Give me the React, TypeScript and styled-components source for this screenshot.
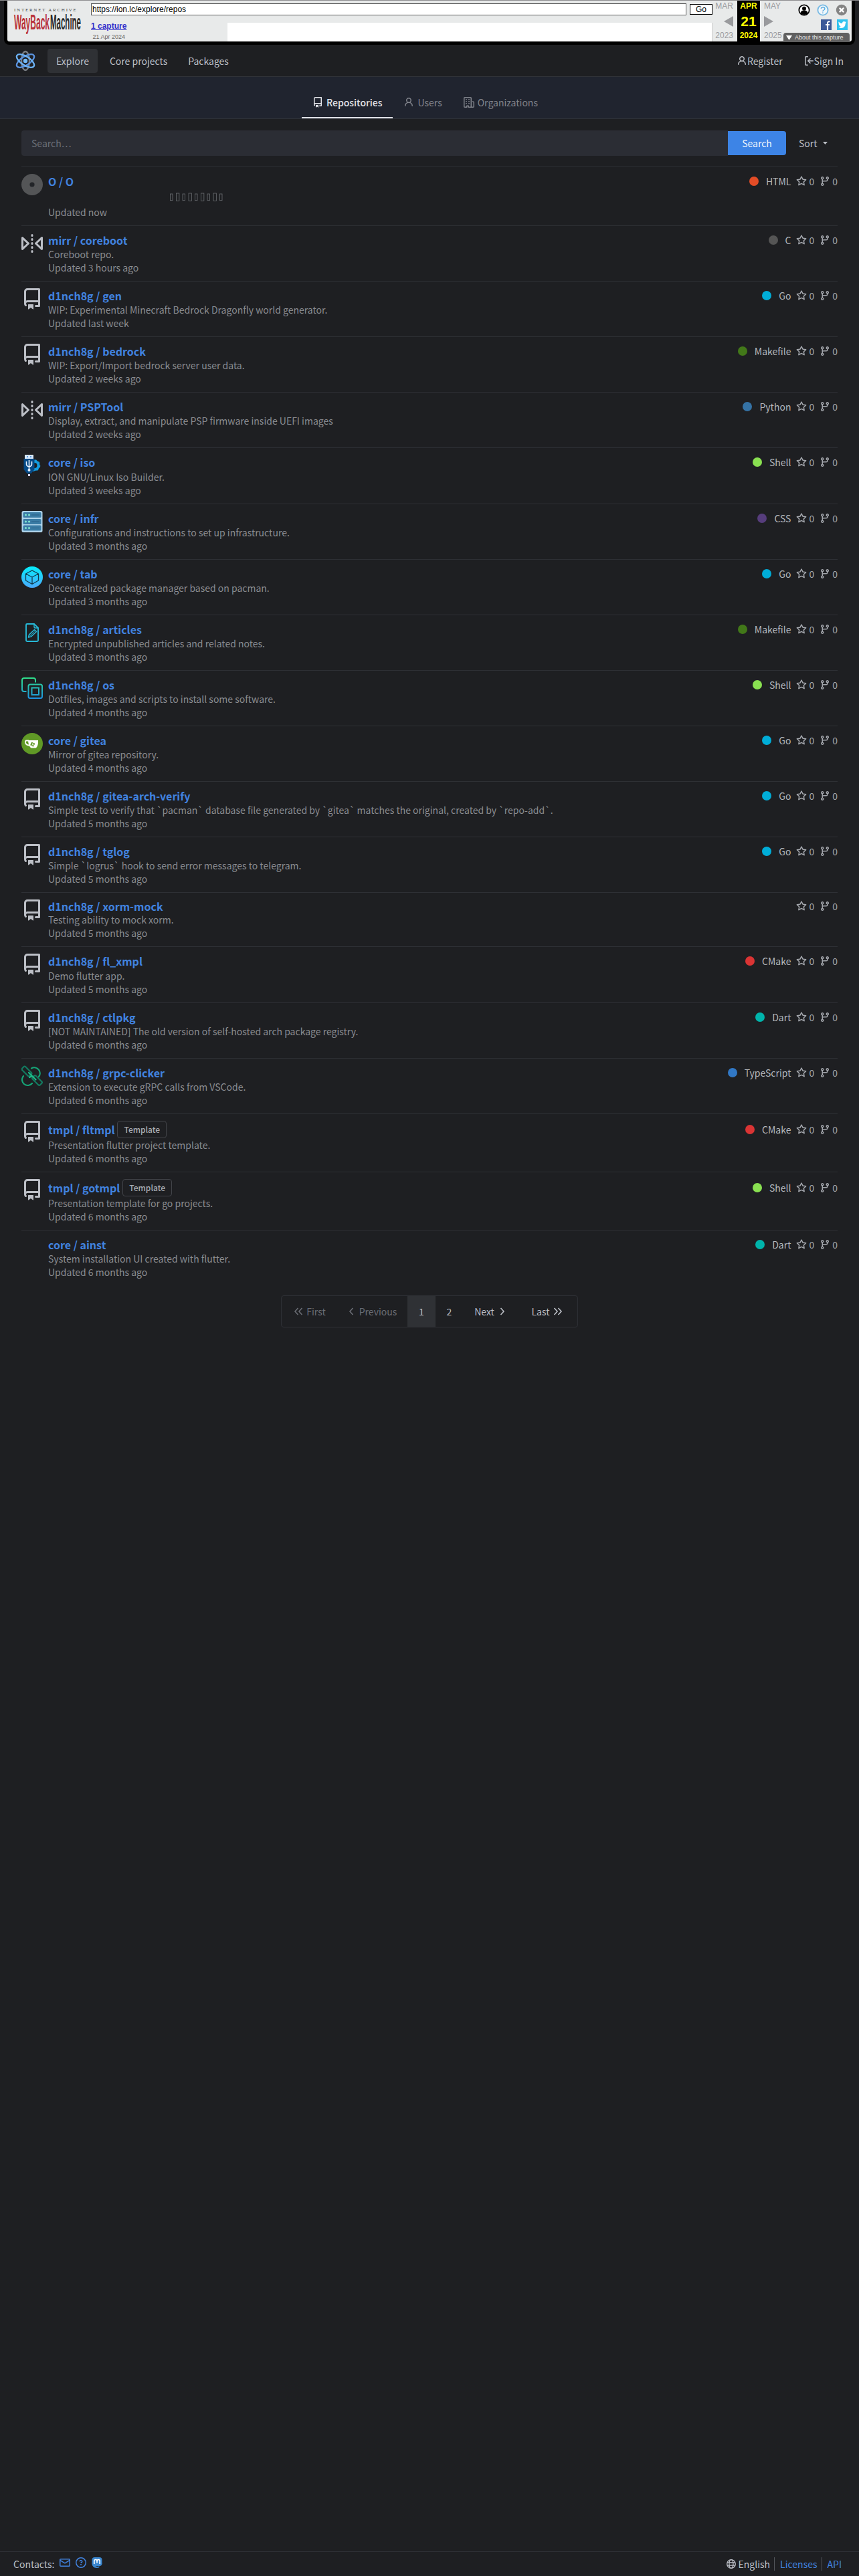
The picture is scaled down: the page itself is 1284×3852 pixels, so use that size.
import React from "react";
import styled, { createGlobalStyle } from "styled-components";

type IconName =
  | "repo"
  | "mirror"
  | "star"
  | "branch"
  | "person"
  | "signIn"
  | "organization"
  | "mail"
  | "question";

type AvatarName =
  | "repo"
  | "mirror"
  | "disc"
  | "usb"
  | "server"
  | "cube"
  | "article"
  | "layers"
  | "gitea"
  | "clicker"
  | "none";

interface IRepo {
  owner: string;
  name: string;
  avatar: AvatarName;
  updated: string;
  description?: string;
  language?: string;
  template?: boolean;
}

const iconPaths: Record<IconName, string> = {
  repo: "M2 2.5A2.5 2.5 0 0 1 4.5 0h8.75a.75.75 0 0 1 .75.75v12.5a.75.75 0 0 1-.75.75h-2.5a.75.75 0 0 1 0-1.5h1.75v-2h-8a1 1 0 0 0-.714 1.7.75.75 0 1 1-1.072 1.05A2.495 2.495 0 0 1 2 11.5Zm10.5-1h-8a1 1 0 0 0-1 1v6.708A2.486 2.486 0 0 1 4.5 9h8ZM5 12.25a.25.25 0 0 1 .25-.25h3.5a.25.25 0 0 1 .25.25v3.25a.25.25 0 0 1-.4.2l-1.45-1.087a.249.249 0 0 0-.3 0L5.4 15.7a.25.25 0 0 1-.4-.2Z",
  mirror:
    "M15.547 3.061A.75.75 0 0 1 16 3.75v8.5a.751.751 0 0 1-1.265.545l-4.5-4.25a.75.75 0 0 1 0-1.09l4.5-4.25a.75.75 0 0 1 .812-.144ZM0 12.25v-8.5a.751.751 0 0 1 1.265-.545l4.5 4.25a.75.75 0 0 1 0 1.09l-4.5 4.25A.75.75 0 0 1 0 12.25Zm1.5-6.76v5.02L4.158 8ZM11.842 8l2.658 2.51V5.49ZM8 4a.75.75 0 0 1 .75.75v.5a.75.75 0 0 1-1.5 0v-.5A.75.75 0 0 1 8 4Zm.75-2.25v.5a.75.75 0 0 1-1.5 0v-.5a.75.75 0 0 1 1.5 0Zm0 6v.5a.75.75 0 0 1-1.5 0v-.5a.75.75 0 0 1 1.5 0ZM8 10a.75.75 0 0 1 .75.75v.5a.75.75 0 0 1-1.5 0v-.5A.75.75 0 0 1 8 10Zm0 3a.75.75 0 0 1 .75.75v.5a.75.75 0 0 1-1.5 0v-.5A.75.75 0 0 1 8 13Z",
  star: "M8 .25a.75.75 0 0 1 .673.418l1.882 3.815 4.21.612a.75.75 0 0 1 .416 1.279l-3.046 2.97.719 4.192a.751.751 0 0 1-1.088.791L8 12.347l-3.766 1.98a.75.75 0 0 1-1.088-.79l.72-4.194L.818 6.374a.75.75 0 0 1 .416-1.28l4.21-.611L7.327.668A.75.75 0 0 1 8 .25Zm0 2.445L6.615 5.5a.75.75 0 0 1-.564.41l-3.097.45 2.24 2.184a.75.75 0 0 1 .216.664l-.528 3.084 2.769-1.456a.75.75 0 0 1 .698 0l2.77 1.456-.53-3.084a.75.75 0 0 1 .216-.664l2.24-2.183-3.096-.45a.75.75 0 0 1-.564-.41L8 2.694Z",
  branch:
    "M9.5 3.25a2.25 2.25 0 1 1 3 2.122V6A2.5 2.5 0 0 1 10 8.5H6a1 1 0 0 0-1 1v1.128a2.251 2.251 0 1 1-1.5 0V5.372a2.25 2.25 0 1 1 1.5 0v1.836A2.493 2.493 0 0 1 6 7h4a1 1 0 0 0 1-1v-.628A2.25 2.25 0 0 1 9.5 3.25Zm-6 0a.75.75 0 1 0 1.5 0 .75.75 0 0 0-1.5 0Zm8.25-.75a.75.75 0 1 0 0 1.5.75.75 0 0 0 0-1.5ZM4.25 12a.75.75 0 1 0 0 1.5.75.75 0 0 0 0-1.5Z",
  person:
    "M10.561 8.073a6.005 6.005 0 0 1 3.432 5.142.75.75 0 1 1-1.498.07 4.5 4.5 0 0 0-8.99 0 .75.75 0 0 1-1.498-.07 6.004 6.004 0 0 1 3.431-5.142 3.999 3.999 0 1 1 5.123 0ZM10.5 5a2.5 2.5 0 1 0-5 0 2.5 2.5 0 0 0 5 0Z",
  signIn:
    "M2 2.75C2 1.784 2.784 1 3.75 1h2.5a.75.75 0 0 1 0 1.5h-2.5a.25.25 0 0 0-.25.25v10.5c0 .138.112.25.25.25h2.5a.75.75 0 0 1 0 1.5h-2.5A1.75 1.75 0 0 1 2 13.25Zm6.56 4.5h5.69a.75.75 0 0 1 0 1.5H8.56l1.97 1.97a.749.749 0 0 1-.326 1.275.749.749 0 0 1-.734-.215L6.22 8.53a.75.75 0 0 1 0-1.06l3.25-3.25a.749.749 0 0 1 1.275.326.749.749 0 0 1-.215.734Z",
  organization:
    "M1.75 16A1.75 1.75 0 0 1 0 14.25V1.75C0 .784.784 0 1.75 0h8.5C11.216 0 12 .784 12 1.75v12.5c0 .085-.006.168-.018.25h2.268a.25.25 0 0 0 .25-.25V8.285a.25.25 0 0 0-.111-.208l-1.055-.703a.749.749 0 1 1 .832-1.248l1.055.703c.487.325.779.871.779 1.456v5.965A1.75 1.75 0 0 1 14.25 16h-3.5a.766.766 0 0 1-.197-.026c-.099.017-.2.026-.303.026h-3a.75.75 0 0 1-.75-.75V14h-1v1.25a.75.75 0 0 1-.75.75Zm-.25-1.75c0 .138.112.25.25.25H4v-1.25a.75.75 0 0 1 .75-.75h2.5a.75.75 0 0 1 .75.75v1.25h2.25a.25.25 0 0 0 .25-.25V1.75a.25.25 0 0 0-.25-.25h-8.5a.25.25 0 0 0-.25.25ZM3.75 6h.5a.75.75 0 0 1 0 1.5h-.5a.75.75 0 0 1 0-1.5ZM3 3.75A.75.75 0 0 1 3.75 3h.5a.75.75 0 0 1 0 1.5h-.5A.75.75 0 0 1 3 3.75Zm4 3A.75.75 0 0 1 7.75 6h.5a.75.75 0 0 1 0 1.5h-.5A.75.75 0 0 1 7 6.75ZM7.75 3h.5a.75.75 0 0 1 0 1.5h-.5a.75.75 0 0 1 0-1.5ZM3 9.75A.75.75 0 0 1 3.75 9h.5a.75.75 0 0 1 0 1.5h-.5A.75.75 0 0 1 3 9.75ZM7.75 9h.5a.75.75 0 0 1 0 1.5h-.5a.75.75 0 0 1 0-1.5Z",
  mail: "M1.75 2h12.5c.966 0 1.75.784 1.75 1.75v8.5A1.75 1.75 0 0 1 14.25 14H1.75A1.75 1.75 0 0 1 0 12.25v-8.5C0 2.784.784 2 1.75 2ZM1.5 12.251c0 .138.112.25.25.25h12.5a.25.25 0 0 0 .25-.25V5.809L8.38 9.397a.75.75 0 0 1-.76 0L1.5 5.809v6.442Zm13-8.181v-.32a.25.25 0 0 0-.25-.25H1.75a.25.25 0 0 0-.25.25v.32L8 7.88Z",
  question:
    "M0 8a8 8 0 1 1 16 0A8 8 0 0 1 0 8Zm8-6.5a6.5 6.5 0 1 0 0 13 6.5 6.5 0 0 0 0-13ZM6.92 6.085h.001a.749.749 0 1 1-1.342-.67c.169-.339.436-.701.849-.977C6.845 4.16 7.369 4 8 4a2.756 2.756 0 0 1 1.637.525c.503.377.863.965.863 1.725 0 .448-.115.83-.329 1.15-.205.307-.47.513-.692.662-.109.072-.22.138-.313.195l-.006.004a6.24 6.24 0 0 0-.26.16.952.952 0 0 0-.276.245.75.75 0 0 1-1.248-.832c.184-.264.42-.489.692-.661.103-.067.207-.132.313-.195l.007-.004c.1-.061.182-.11.258-.161a.969.969 0 0 0 .277-.245C8.96 6.514 9 6.427 9 6.25a.612.612 0 0 0-.262-.525A1.27 1.27 0 0 0 8 5.5c-.369 0-.595.09-.74.187a1.01 1.01 0 0 0-.34.398ZM9 11a1 1 0 1 1-2 0 1 1 0 0 1 2 0Z",
};

const languageColors: Record<string, string> = {
  HTML: "#e34c26",
  C: "#555555",
  Go: "#00add8",
  Makefile: "#427819",
  Python: "#3572a5",
  Shell: "#89e051",
  CSS: "#563d7c",
  CMake: "#da3434",
  Dart: "#00b4ab",
  TypeScript: "#3178c6",
};

const repos: IRepo[] = [
  { owner: "O", name: "O", avatar: "disc", updated: "now", language: "HTML" },
  { owner: "mirr", name: "coreboot", avatar: "mirror", description: "Coreboot repo.", updated: "3 hours ago", language: "C" },
  { owner: "d1nch8g", name: "gen", avatar: "repo", description: "WIP: Experimental Minecraft Bedrock Dragonfly world generator.", updated: "last week", language: "Go" },
  { owner: "d1nch8g", name: "bedrock", avatar: "repo", description: "WIP: Export/Import bedrock server user data.", updated: "2 weeks ago", language: "Makefile" },
  { owner: "mirr", name: "PSPTool", avatar: "mirror", description: "Display, extract, and manipulate PSP firmware inside UEFI images", updated: "2 weeks ago", language: "Python" },
  { owner: "core", name: "iso", avatar: "usb", description: "ION GNU/Linux Iso Builder.", updated: "3 weeks ago", language: "Shell" },
  { owner: "core", name: "infr", avatar: "server", description: "Configurations and instructions to set up infrastructure.", updated: "3 months ago", language: "CSS" },
  { owner: "core", name: "tab", avatar: "cube", description: "Decentralized package manager based on pacman.", updated: "3 months ago", language: "Go" },
  { owner: "d1nch8g", name: "articles", avatar: "article", description: "Encrypted unpublished articles and related notes.", updated: "3 months ago", language: "Makefile" },
  { owner: "d1nch8g", name: "os", avatar: "layers", description: "Dotfiles, images and scripts to install some software.", updated: "4 months ago", language: "Shell" },
  { owner: "core", name: "gitea", avatar: "gitea", description: "Mirror of gitea repository.", updated: "4 months ago", language: "Go" },
  { owner: "d1nch8g", name: "gitea-arch-verify", avatar: "repo", description: "Simple test to verify that `pacman` database file generated by `gitea` matches the original, created by `repo-add`.", updated: "5 months ago", language: "Go" },
  { owner: "d1nch8g", name: "tglog", avatar: "repo", description: "Simple `logrus` hook to send error messages to telegram.", updated: "5 months ago", language: "Go" },
  { owner: "d1nch8g", name: "xorm-mock", avatar: "repo", description: "Testing ability to mock xorm.", updated: "5 months ago" },
  { owner: "d1nch8g", name: "fl_xmpl", avatar: "repo", description: "Demo flutter app.", updated: "5 months ago", language: "CMake" },
  { owner: "d1nch8g", name: "ctlpkg", avatar: "repo", description: "[NOT MAINTAINED] The old version of self-hosted arch package registry.", updated: "6 months ago", language: "Dart" },
  { owner: "d1nch8g", name: "grpc-clicker", avatar: "clicker", description: "Extension to execute gRPC calls from VSCode.", updated: "6 months ago", language: "TypeScript" },
  { owner: "tmpl", name: "fltmpl", avatar: "repo", description: "Presentation flutter project template.", updated: "6 months ago", language: "CMake", template: true },
  { owner: "tmpl", name: "gotmpl", avatar: "repo", description: "Presentation template for go projects.", updated: "6 months ago", language: "Shell", template: true },
  { owner: "core", name: "ainst", avatar: "none", description: "System installation UI created with flutter.", updated: "6 months ago", language: "Dart" },
];

const Icon = ({ name, size = 16 }: { name: IconName; size?: number }) => (
  <Svg width={size} height={size} viewBox="0 0 16 16" fill="currentColor">
    <path d={iconPaths[name]} />
  </Svg>
);

const Chevron = ({ left, double }: { left?: boolean; double?: boolean }) => (
  <Svg
    width={double ? 14 : 8}
    height={14}
    viewBox={double ? "0 0 14 14" : "0 0 8 14"}
    fill="none"
    stroke="currentColor"
    strokeWidth="1.6"
  >
    {left ? (
      <>
        <path d="M6.5 2 2 7l4.500 5" />
        {double && <path d="M12.500 2 8 7l4.500 5" />}
      </>
    ) : (
      <>
        <path d="M1.500 2 6 7l-4.500 5" />
        {double && <path d="M7.500 2 12 7l-4.500 5" />}
      </>
    )}
  </Svg>
);

const SiteLogo = () => (
  <Svg width="30" height="32" viewBox="0 0 30 32" fill="none" strokeWidth="2.4">
    <ellipse cx="15" cy="16" rx="6" ry="14" stroke="#777b80" />
    <ellipse cx="15" cy="16" rx="6.500" ry="15" stroke="#5b94e0" transform="rotate(57 15 16)" />
    <ellipse cx="15" cy="16" rx="6.500" ry="15" stroke="#6cb2f5" transform="rotate(-57 15 16)" />
    <circle cx="15" cy="16" r="3.200" fill="#74baf8" />
  </Svg>
);

const Avatar = ({ name }: { name: AvatarName }) => {
  switch (name) {
    case "repo":
    case "mirror":
      return <Icon name={name} size={32} />;
    case "disc":
      return (
        <Svg width="32" height="32" viewBox="0 0 32 32">
          <circle cx="16" cy="16" r="16" fill="#545557" />
          <circle cx="16" cy="16" r="3.600" fill="#222428" />
        </Svg>
      );
    case "usb":
      return (
        <Svg width="32" height="32" viewBox="0 0 32 32">
          <circle cx="19.500" cy="16" r="6" fill="none" stroke="#139ce0" strokeWidth="4" />
          <circle cx="19.500" cy="16" r="8" fill="none" stroke="#139ce0" strokeWidth="1.600" strokeDasharray="3 3.280" />
          <path d="M5 0h13v7H5z" fill="#d5e7fb" />
          <path d="M8 2h2v2H8zM13 2h2v2h-2z" fill="#5c98d8" />
          <path d="M3.500 6h16v16l-5 6h-6l-5-6z" fill="#064a86" />
          <path d="M11.500 8v15M7.500 10v4q0 3 4 4 4-1 4-4v-4" fill="none" stroke="#e8f2ff" strokeWidth="1.600" />
          <circle cx="11.500" cy="23" r="2" fill="#e8f2ff" />
          <path d="M10 29h3v3h-3z" fill="#d9d6ff" />
        </Svg>
      );
    case "server":
      return (
        <Svg width="32" height="32" viewBox="0 0 32 32">
          <rect width="31" height="32" x=".5" rx="2.500" fill="#aed3ea" />
          {[2, 12, 21.5].map((y) => (
            <g key={y}>
              <rect x="2.500" y={y} width="27" height="8" rx="1.500" fill="#3b7ca5" />
              <circle cx="6.500" cy={y + 4} r="1.500" fill="#80e8d0" />
              <circle cx="11.500" cy={y + 4} r="1.500" fill="#80e8d0" />
              <path d={`M15 ${y + 4}h12`} stroke="#285f86" />
            </g>
          ))}
        </Svg>
      );
    case "cube":
      return (
        <Svg width="32" height="32" viewBox="0 0 32 32">
          <defs>
            <linearGradient id="cubeFill" x1="0" y1="0" x2="0" y2="1">
              <stop offset="0" stopColor="#05eefc" />
              <stop offset="1" stopColor="#4aa9fd" />
            </linearGradient>
          </defs>
          <circle cx="16" cy="16" r="16" fill="url(#cubeFill)" />
          <path
            d="M16 6l9.500 5v10L16 26.500 6.500 21V11zM6.500 11l9.500 5 9.500-5M16 16v10.500"
            fill="none"
            stroke="#123c50"
            strokeWidth="1.300"
            strokeLinejoin="round"
          />
        </Svg>
      );
    case "article":
      return (
        <Svg width="32" height="32" viewBox="0 0 32 32" fill="none" stroke="#27b9d8" strokeWidth="1.900">
          <path d="M8.500 3H19l6 6v18.500q0 1.500-1.500 1.500h-15Q7 29 7 27.500v-23Q7 3 8.500 3z" />
          <path d="M19 3v4.500Q19 9 20.500 9H25" strokeWidth="1.400" />
          <path d="M10.500 23l1-4 8-7.500 3 3-8 7.500z" strokeWidth="1.500" strokeLinejoin="round" />
          <path d="M12.500 21l7-6.500" strokeWidth="1" />
        </Svg>
      );
    case "layers":
      return (
        <Svg width="32" height="32" viewBox="0 0 32 32" fill="none" strokeWidth="2">
          <defs>
            <linearGradient id="layersStroke" gradientUnits="userSpaceOnUse" x1="0" y1="0" x2="0" y2="32">
              <stop offset="0" stopColor="#2fe089" />
              <stop offset="1" stopColor="#1d94e6" />
            </linearGradient>
          </defs>
          <g stroke="url(#layersStroke)">
            <path d="M7.500 21H4q-3 0-3-3V4q0-3 3-3h14q3 0 3 3v3.500" />
            <rect x="10.500" y="10.500" width="20.500" height="20.500" rx="2.500" />
            <rect x="15.500" y="15.500" width="10.500" height="10.500" />
          </g>
        </Svg>
      );
    case "gitea":
      return (
        <Svg width="32" height="32" viewBox="0 0 32 32">
          <circle cx="16" cy="16" r="16" fill="#609926" />
          <path d="M11 11.500H7.500Q5.500 11.500 6 14.500q.8 3.800 6 4" fill="none" stroke="#fff" strokeWidth="1.800" />
          <path d="M10 11h15q.5 9-3.500 11.500h-7Q10.500 20 10 11z" fill="#fff" />
          <rect x="14" y="14.500" width="5.500" height="5.500" rx="1" fill="#609926" transform="rotate(25 17 17)" />
          <path d="M17.500 14.500l-2 5M16 17h2v2" fill="none" stroke="#fff" strokeWidth=".8" />
        </Svg>
      );
    case "clicker":
      return (
        <Svg width="32" height="32" viewBox="0 0 32 32" fill="none" strokeWidth="2.200" strokeLinecap="round">
          <path d="M15 4.500a8.500 8.500 0 0 1 11 12.500M3 16a8.500 8.500 0 0 0 13 11" stroke="#16a477" />
          <rect x="0" y="5.500" width="16" height="7" rx="2" transform="rotate(45 8 9)" stroke="#137a60" />
          <rect x="15.500" y="19" width="16" height="7" rx="2" transform="rotate(45 23.500 22.500)" stroke="#137a60" />
          <path d="M11 11l10.500 10.500M12 18l4-2" stroke="#1cbd88" />
        </Svg>
      );
    default:
      return null;
  }
};

// the glyphs of the first description have no font, only their boxes show
const MissingGlyphs = () => (
  <Svg width="84" height="14" viewBox="0 0 84 14" fill="none" stroke="#6c6f73" strokeWidth=".8">
    {[0, 1, 2, 3, 4, 5, 6, 7, 8].map((i) =>
      i % 2 ? (
        <rect key={i} x={i * 9.25 + 0.3} y="1" width="4.300" height="11.400" />
      ) : (
        <rect key={i} x={i * 9.25 + 0.5} y="2" width="3.500" height="9.600" />
      )
    )}
  </Svg>
);

const WaybackBar = () => (
  <Wayback>
    <WaybackLogo>
      <ArchiveName>INTERNET ARCHIVE</ArchiveName>
      <Svg width="102" height="30" viewBox="0 0 102 30">
        <g fontFamily="Liberation Sans, sans-serif" fontWeight="700">
          <text x="1" y="0" fontSize="14" textLength="53" lengthAdjust="spacingAndGlyphs" fill="#b8323a" transform="matrix(1 0 0 2.200 0 23)">
            WayBack
          </text>
          <text x="55" y="0" fontSize="14" textLength="46" lengthAdjust="spacingAndGlyphs" fill="#2b2b2b" transform="matrix(1 0 0 2.200 0 23)">
            Machine
          </text>
        </g>
      </Svg>
    </WaybackLogo>
    <WaybackMain>
      <WaybackForm>
        <WaybackInput>https://ion.lc/explore/repos</WaybackInput>
        <GoButton>Go</GoButton>
      </WaybackForm>
      <WaybackCaptures>
        <CaptureInfo>
          <a>1 capture</a>
          <span>21 Apr 2024</span>
        </CaptureInfo>
        <Sparkline />
      </WaybackCaptures>
    </WaybackMain>
    <MonthColumn $align="right">
      <span>MAR</span>
      <Svg width="14" height="16" viewBox="0 0 14 16">
        <path d="M14 0v16L0 8z" fill="#999a9d" />
      </Svg>
      <span>2023</span>
    </MonthColumn>
    <CurrentDate>
      <span>APR</span>
      <strong>21</strong>
      <span>2024</span>
    </CurrentDate>
    <MonthColumn $align="left">
      <span>MAY</span>
      <Svg width="14" height="16" viewBox="0 0 14 16">
        <path d="M0 0v16l14-8z" fill="#999a9d" />
      </Svg>
      <span>2025</span>
    </MonthColumn>
    <WaybackTools>
      <ToolRow $gap={10}>
        <Svg width="18" height="18" viewBox="0 0 18 18">
          <circle cx="9" cy="9" r="7.700" fill="#fff" stroke="#000" strokeWidth="1.800" />
          <circle cx="9" cy="6.800" r="3" />
          <path d="M3.500 14q0-4.500 5.500-4.500t5.500 4.500Q9 18 3.500 14z" />
        </Svg>
        <Svg width="18" height="18" viewBox="0 0 18 18">
          <circle cx="9" cy="9" r="7.600" fill="#eef6fb" stroke="#75b9e4" strokeWidth="1.800" />
          <text x="9" y="13.800" fontSize="14" textAnchor="middle" fill="#4fa6dc" fontFamily="Liberation Sans, sans-serif">
            ?
          </text>
        </Svg>
        <Svg width="18" height="18" viewBox="0 0 18 18">
          <circle cx="9" cy="9" r="8.200" fill="#848484" />
          <path d="M5.800 5.800l6.400 6.400M12.200 5.800l-6.400 6.400" stroke="#fff" strokeWidth="2.400" />
        </Svg>
      </ToolRow>
      <ToolRow $gap={8}>
        <Svg width="16" height="16" viewBox="0 0 16 16">
          <path d="M0 0h16v16H0z" fill="#3b5998" />
          <path d="M10 16V5.500Q10 3 13.500 3.200M7 8h6" fill="none" stroke="#fff" strokeWidth="2.200" />
        </Svg>
        <Svg width="16" height="16" viewBox="0 0 16 16">
          <path d="M0 0h16v16H0z" fill="#2fc2ef" />
          <path
            d="M2.500 3.500Q5 6 8 6q0-3 2.500-3 1.300 0 1.800.8l1.700-.6-.9 1.500 1-.2-1.300 1.300Q12.500 13 6.500 13q-2.500 0-4-1.200 2 .1 3.300-1-1.800-.2-2.200-1.700h1Q2.500 8.300 2.500 6.200l1 .3Q1.800 5.200 2.500 3.500z"
            fill="#fff"
          />
        </Svg>
      </ToolRow>
      <AboutCapture>
        <Svg width="9" height="7" viewBox="0 0 9 7">
          <path d="M0 0h9L4.500 7z" fill="#fff" />
        </Svg>
        About this capture
      </AboutCapture>
    </WaybackTools>
  </Wayback>
);

const RepoItem = ({ repo }: { repo: IRepo }) => (
  <RepoRow>
    <AvatarBox>
      <Avatar name={repo.avatar} />
    </AvatarBox>
    <RepoMain>
      <RepoHeader $compact={!repo.language} $tall={!!repo.template}>
        <RepoTitle>
          <a>
            {repo.owner} / {repo.name}
          </a>
          {repo.template && <TemplateLabel>Template</TemplateLabel>}
        </RepoTitle>
        <RepoStats>
          {repo.language && (
            <Language>
              <ColorDot $color={languageColors[repo.language]} />
              {repo.language}
            </Language>
          )}
          <Stat>
            <Icon name="star" />0
          </Stat>
          <Stat>
            <Icon name="branch" />0
          </Stat>
        </RepoStats>
      </RepoHeader>
      {repo.description ? (
        <RepoText>{repo.description}</RepoText>
      ) : (
        <GlyphLine>
          <MissingGlyphs />
        </GlyphLine>
      )}
      <RepoText>Updated {repo.updated}</RepoText>
    </RepoMain>
  </RepoRow>
);

const App: React.FC = () => {
  return (
    <>
      <GlobalStyle />
      <Page>
        <WaybackBar />
        <NavBar>
          <NavGroup>
            <LogoLink>
              <SiteLogo />
            </LogoLink>
            <NavItem $active>Explore</NavItem>
            <NavItem>Core projects</NavItem>
            <NavItem>Packages</NavItem>
          </NavGroup>
          <NavGroup>
            <NavItem>
              <Icon name="person" />
              Register
            </NavItem>
            <NavItem>
              <Icon name="signIn" />
              Sign In
            </NavItem>
          </NavGroup>
        </NavBar>
        <TabBar>
          <Tab $active>
            <Icon name="repo" />
            Repositories
          </Tab>
          <Tab>
            <Icon name="person" />
            Users
          </Tab>
          <Tab>
            <Icon name="organization" />
            Organizations
          </Tab>
        </TabBar>
        <Content>
          <SearchRow>
            <SearchBox>Search…</SearchBox>
            <SearchButton>Search</SearchButton>
            <SortMenu>
              Sort
              <Svg width="7" height="4" viewBox="0 0 7 4">
                <path d="M0 0h7L3.500 4z" fill="currentColor" />
              </Svg>
            </SortMenu>
          </SearchRow>
          <RepoList>
            {repos.map((repo) => (
              <RepoItem key={`${repo.owner}/${repo.name}`} repo={repo} />
            ))}
          </RepoList>
          <Pagination>
            <PageLink $width={84} $disabled>
              <Chevron left double />
              First
            </PageLink>
            <PageLink $width={104} $gap={8} $disabled>
              <Chevron left />
              Previous
            </PageLink>
            <PageLink $width={42} $active>
              1
            </PageLink>
            <PageLink $width={41}>2</PageLink>
            <PageLink $width={80} $gap={8}>
              Next
              <Chevron />
            </PageLink>
            <PageLink $width={91}>
              Last
              <Chevron double />
            </PageLink>
          </Pagination>
        </Content>
        <Footer>
          <Contacts>
            Contacts:
            <ContactLinks>
              <Icon name="mail" />
              <Icon name="question" />
              <Svg width="16" height="16" viewBox="0 0 16 16">
                <rect x=".5" width="15" height="13" rx="4" fill="#3b88d0" />
                <path d="M.5 8q0 8 7 8 3 0 4-1v-1.500q-5 1.200-6.500-1L11 13q4-.5 4.500-4z" fill="#3b88d0" />
                <path d="M3.800 10V5.800Q3.800 3.500 6 3.500t2 2.500v2.500V6q0-2.500 2.200-2.500t2 2.300V10" fill="none" stroke="#fff" strokeWidth="1.700" />
              </Svg>
            </ContactLinks>
          </Contacts>
          <FooterLinks>
            <span>
              <Svg width="14" height="14" viewBox="0 0 14 14" fill="none" stroke="currentColor" strokeWidth="1.300">
                <circle cx="7" cy="7" r="6.300" />
                <ellipse cx="7" cy="7" rx="3" ry="6.300" />
                <path d="M1 5h12M1 9.200h12" />
              </Svg>
              English
            </span>
            <a>Licenses</a>
            <a>API</a>
          </FooterLinks>
        </Footer>
      </Page>
    </>
  );
};

export default App;

const GlobalStyle = createGlobalStyle`
  * {
    box-sizing: border-box;
  }
  body {
    margin: 0;
    background-color: #1e1f22;
    color: #bcbfc6;
    font-family: "Noto Sans CJK JP", "Noto Sans", sans-serif;
    font-size: 14px;
    line-height: 20px;
  }
`;

const Svg = styled.svg`
  display: block;
  flex-shrink: 0;
`;

const Page = styled.div`
  display: flex;
  flex-direction: column;
  height: 3852px;
  border-top: 1px solid #8e8e90;
  overflow: hidden;
`;

const Wayback = styled.div`
  display: flex;
  height: 66px;
  margin: 0 6px;
  border: 5px solid #000;
  border-top: none;
  border-radius: 0 0 8px 8px;
  background-color: #e8eaea;
  color: #000;
  font-family: "Liberation Sans", Arial, sans-serif;
  flex-shrink: 0;
`;

const WaybackLogo = styled.div`
  display: flex;
  flex-direction: column;
  width: 102px;
  margin: 9px 14px 0 9px;
`;

const ArchiveName = styled.span`
  margin-left: 1px;
  color: #444;
  font-family: "Liberation Serif", serif;
  font-size: 7px;
  letter-spacing: 1.75px;
  line-height: 11px;
  white-space: nowrap;
`;

const WaybackMain = styled.div`
  display: flex;
  flex-direction: column;
  width: 929px;
`;

const WaybackForm = styled.div`
  display: flex;
  align-items: center;
  gap: 5px;
  margin-top: 4px;
`;

const WaybackInput = styled.div`
  width: 890px;
  height: 18px;
  border: 1px solid #555;
  padding-left: 1px;
  background-color: #fff;
  font-size: 12px;
  line-height: 16px;
`;

const GoButton = styled.div`
  width: 34px;
  height: 16px;
  border: 1px solid #000;
  background-color: #fff;
  font-size: 12px;
  line-height: 15px;
  text-align: center;
`;

const WaybackCaptures = styled.div`
  display: flex;
  justify-content: space-between;
  margin-top: 8px;
`;

const CaptureInfo = styled.div`
  display: flex;
  flex-direction: column;
  align-items: center;
  & a {
    color: #3333cc;
    font-size: 12px;
    font-weight: 700;
    line-height: 16px;
    text-decoration: underline;
  }
  & span {
    color: #666;
    font-size: 9px;
    line-height: 16px;
  }
`;

const Sparkline = styled.div`
  width: 725px;
  height: 28px;
  margin-top: 3px;
  border-right: 1px solid #ccc;
  background-color: #fff;
`;

const MonthColumn = styled.div<{ $align: "left" | "right" }>`
  display: flex;
  flex-direction: column;
  align-items: ${({ $align }) =>
    $align === "right" ? "flex-end" : "flex-start"};
  justify-content: space-between;
  width: ${({ $align }) => ($align === "right" ? 37 : 34)}px;
  padding: ${({ $align }) =>
    $align === "right" ? "0 6px 0 0" : "0 0 0 6px"};
  color: #9a9b9f;
  font-size: 12px;
  line-height: 17px;
`;

const CurrentDate = styled.div`
  display: flex;
  flex-direction: column;
  align-items: center;
  justify-content: space-between;
  width: 34px;
  background-color: #000;
  color: #ff0;
  font-size: 12px;
  font-weight: 700;
  line-height: 17px;
  & strong {
    font-size: 21px;
    line-height: 22px;
  }
`;

const WaybackTools = styled.div`
  display: flex;
  flex-direction: column;
  align-items: flex-end;
  width: 103px;
  padding: 5px 3px 0 0;
  margin-left: auto;
`;

const ToolRow = styled.div<{ $gap: number }>`
  display: flex;
  gap: ${({ $gap }) => $gap}px;
  margin: 0 3px 5px 0;
`;

const AboutCapture = styled.div`
  display: flex;
  align-items: center;
  gap: 4px;
  width: 99px;
  height: 14px;
  margin-top: -1px;
  padding-left: 4px;
  border-radius: 4px 4px 0 0;
  background-color: #606060;
  color: #e4e4e4;
  font-size: 9px;
  line-height: 14px;
  white-space: nowrap;
`;

const NavBar = styled.nav`
  display: flex;
  align-items: center;
  justify-content: space-between;
  height: 48px;
  padding: 0 10px 0 19px;
  border-bottom: 1px solid #313338;
  flex-shrink: 0;
`;

const NavGroup = styled.div`
  display: flex;
  align-items: center;
  gap: 5px;
`;

const LogoLink = styled.a`
  padding: 0 13px 0 4px;
`;

const NavItem = styled.a<{ $active?: boolean }>`
  display: flex;
  align-items: center;
  height: 36px;
  padding: 0 13px;
  border-radius: 4px;
  background-color: ${({ $active }) => ($active ? "#2f3135" : "transparent")};
`;

const TabBar = styled.div`
  display: flex;
  justify-content: center;
  height: 63px;
  padding: 15px 13px 0 0;
  border-bottom: 1px solid #2f3239;
  background-color: #20242f;
  flex-shrink: 0;
`;

const Tab = styled.a<{ $active?: boolean }>`
  display: flex;
  align-items: center;
  gap: 5px;
  padding: 0 16px;
  border-bottom: 2px solid
    ${({ $active }) => ($active ? "#dfe1e6" : "transparent")};
  color: ${({ $active }) => ($active ? "#e3e5ea" : "#80838b")};
  font-weight: ${({ $active }) => ($active ? 500 : 400)};
`;

const Content = styled.main`
  display: flex;
  flex-direction: column;
  flex: 1;
  padding: 17px 32px 0;
`;

const SearchRow = styled.div`
  display: flex;
  align-items: center;
  height: 38px;
`;

const SearchBox = styled.div`
  width: 1056px;
  height: 38px;
  padding: 9px 15px;
  border-radius: 4px 0 0 4px;
  background-color: #2b2d34;
  color: #6c7079;
`;

const SearchButton = styled.button`
  width: 87px;
  height: 36px;
  border: none;
  border-radius: 0 4px 4px 0;
  background-color: #3d84e6;
  color: #f2f6fc;
  font-family: inherit;
  font-size: 14px;
`;

const SortMenu = styled.div`
  display: flex;
  align-items: center;
  gap: 8px;
  padding-left: 19px;
`;

const RepoList = styled.div`
  display: flex;
  flex-direction: column;
  margin-top: 16px;
`;

const RepoRow = styled.div`
  display: flex;
  gap: 8px;
  padding: 10px 0;
  border-top: 1px solid #2e3035;
`;

const AvatarBox = styled.div`
  width: 32px;
  height: 32px;
`;

const RepoMain = styled.div`
  display: flex;
  flex-direction: column;
  flex: 1;
`;

const RepoHeader = styled.div<{ $compact: boolean; $tall: boolean }>`
  display: flex;
  align-items: center;
  justify-content: space-between;
  height: ${({ $compact, $tall }) =>
    $tall ? 26 : $compact ? 20 : 22.14}px;
`;

const RepoTitle = styled.div`
  display: flex;
  align-items: center;
  gap: 4px;
  color: #4183e0;
  font-size: 16px;
  font-weight: 700;
`;

const TemplateLabel = styled.span`
  height: 26px;
  padding: 0 9px;
  border: 1px solid #424449;
  border-radius: 4px;
  color: #a9acb2;
  font-size: 12px;
  font-weight: 500;
  line-height: 24px;
`;

const RepoStats = styled.div`
  display: flex;
  align-items: center;
  gap: 8px;
  color: #a3a6ac;
`;

const Language = styled.span`
  display: flex;
  align-items: center;
  gap: 11px;
  color: #b4b7bd;
`;

const ColorDot = styled.i<{ $color: string }>`
  width: 14px;
  height: 14px;
  border-radius: 50%;
  background-color: ${({ $color }) => $color};
`;

const Stat = styled.span`
  display: flex;
  align-items: center;
  gap: 3px;
`;

const RepoText = styled.div`
  color: #8a8c91;
`;

const GlyphLine = styled.div`
  height: 24.8px;
  padding: 6px 0 0 182px;
`;

const Pagination = styled.div`
  display: flex;
  align-self: center;
  height: 48px;
  margin-top: 15px;
  border: 1px solid #2e3035;
  border-radius: 4px;
`;

const PageLink = styled.a<{
  $width: number;
  $gap?: number;
  $active?: boolean;
  $disabled?: boolean;
}>`
  display: flex;
  align-items: center;
  justify-content: center;
  gap: ${({ $gap = 5 }) => $gap}px;
  width: ${({ $width }) => $width}px;
  background-color: ${({ $active }) => ($active ? "#2f3135" : "transparent")};
  color: ${({ $disabled }) => ($disabled ? "#6a6d75" : "#bcbfc6")};
`;

const Footer = styled.footer`
  display: flex;
  justify-content: space-between;
  height: 37px;
  padding: 8px 26px 0 20px;
  border-top: 1px solid #2e3035;
  flex-shrink: 0;
`;

const Contacts = styled.div`
  display: flex;
  gap: 8px;
`;

const ContactLinks = styled.div`
  display: flex;
  gap: 8px;
  color: #4183e0;
`;

const FooterLinks = styled.div`
  display: flex;
  height: 20px;
  & span {
    display: flex;
    align-items: center;
    gap: 4px;
  }
  & a {
    margin-left: 6px;
    padding-left: 8px;
    border-left: 1px solid #52555b;
    color: #4183e0;
  }
`;
